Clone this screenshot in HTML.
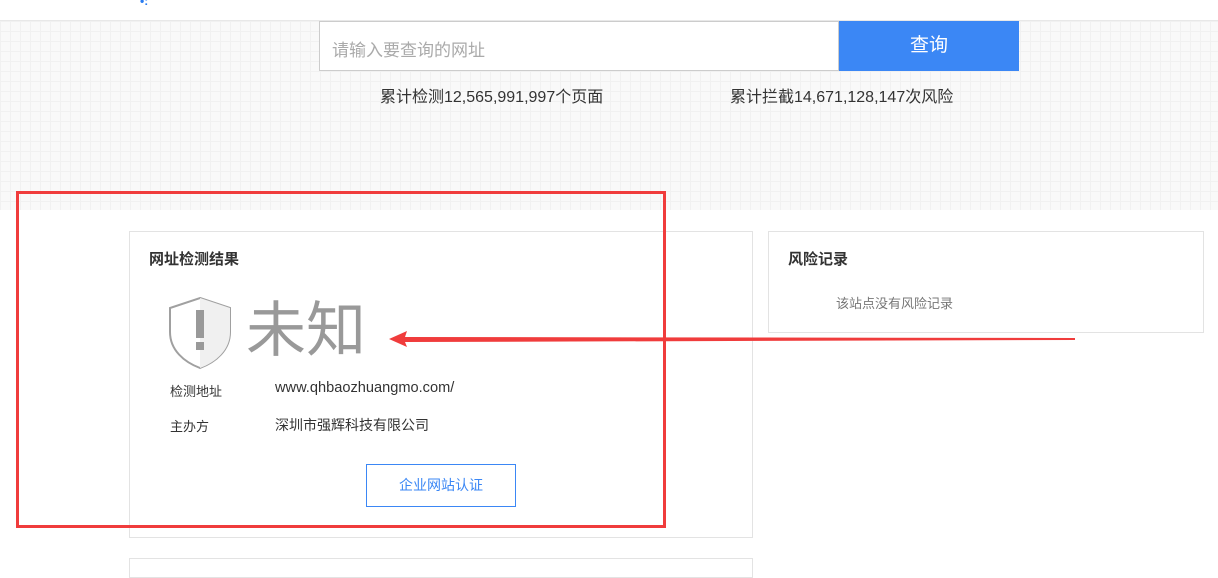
<!DOCTYPE html>
<html><head><meta charset="utf-8"><style>
*{margin:0;padding:0;box-sizing:border-box}
body{width:1218px;height:568px;overflow:hidden;background:#fff;font-family:"Liberation Sans","Noto Sans CJK SC",sans-serif;position:relative}
.grid{position:absolute;left:0;top:20px;width:1218px;height:190px;border-top:1px solid #e8e8e8;background-color:#f9f9f9;
background-image:linear-gradient(#f1f1f1 1px,transparent 1px),linear-gradient(90deg,#f1f1f1 1px,transparent 1px);background-size:10px 10px}
.abs{position:absolute}
.card{position:absolute;border:1px solid #e3e3e3;background:#fff}
</style></head><body>
<div class="abs" style="left:140px;top:-6px;width:10px;height:10px;color:#2a7cf0;font-size:12px;font-weight:bold">•:</div>
<div class="grid"></div>
<div class="abs" style="left:319px;top:21px;width:520px;height:50px;border:1px solid #ccc;background:#fff;font-size:17px;color:#aaa;padding:14px 12px">请输入要查询的网址</div>
<div class="abs" style="left:839px;top:21px;width:180px;height:50px;background:#3b87f5;color:#fff;font-size:19px;text-align:center;line-height:50px">查询</div>
<div class="abs" style="left:380px;top:83px;font-size:16px;color:#333">累计检测12,565,991,997个页面</div>
<div class="abs" style="left:730px;top:83px;font-size:16px;color:#333">累计拦截14,671,128,147次风险</div>
<div class="card" style="left:129px;top:231px;width:624px;height:307px"></div>
<div class="card" style="left:129px;top:558px;width:624px;height:20px"></div>
<div class="card" style="left:768px;top:231px;width:436px;height:102px"></div>
<div class="abs" style="left:149px;top:248px;font-size:15px;font-weight:bold;color:#333">网址检测结果</div>
<div class="abs" style="left:788px;top:248px;font-size:15px;font-weight:bold;color:#333">风险记录</div>
<div class="abs" style="left:836px;top:293px;font-size:13px;color:#777">该站点没有风险记录</div>
<svg class="abs" style="left:168px;top:296px" width="64" height="74" viewBox="0 0 64 74">
<path d="M32 2 L62 12 L62 36 C62 54 48 66 32 72 C16 66 2 54 2 36 L2 12 Z" fill="#fff" stroke="#a0a0a0" stroke-width="2"/>
<path d="M32 2 L62 12 L62 36 C62 54 48 66 32 72 Z" fill="#f0f0f0"/>
<rect x="28" y="14" width="8" height="28" fill="#999"/><rect x="28" y="46" width="8" height="8" fill="#999"/>
</svg>
<div class="abs" style="left:246px;top:296px;font-size:60px;color:#999;line-height:70px">未知</div>
<div class="abs" style="left:170px;top:381px;font-size:13px;color:#333">检测地址</div>
<div class="abs" style="left:275px;top:380px;font-size:14.6px;color:#333">www.qhbaozhuangmo.com/</div>
<div class="abs" style="left:170px;top:416px;font-size:13px;color:#333">主办方</div>
<div class="abs" style="left:275px;top:415px;font-size:14px;color:#333">深圳市强辉科技有限公司</div>
<div class="abs" style="left:366px;top:464px;width:150px;height:43px;border:1px solid #3b87f5;color:#3b87f5;font-size:14px;text-align:center;line-height:41px">企业网站认证</div>
<div class="abs" style="left:16px;top:191px;width:650px;height:337px;border:3px solid #f03c3c"></div>
<svg class="abs" style="left:385px;top:328px" width="700" height="22">
<path d="M4 11 L22 3 L20 9 L690 10 L690 12 L20 14 L22 19 Z" fill="#f03c3c"/>
</svg>
</body></html>
